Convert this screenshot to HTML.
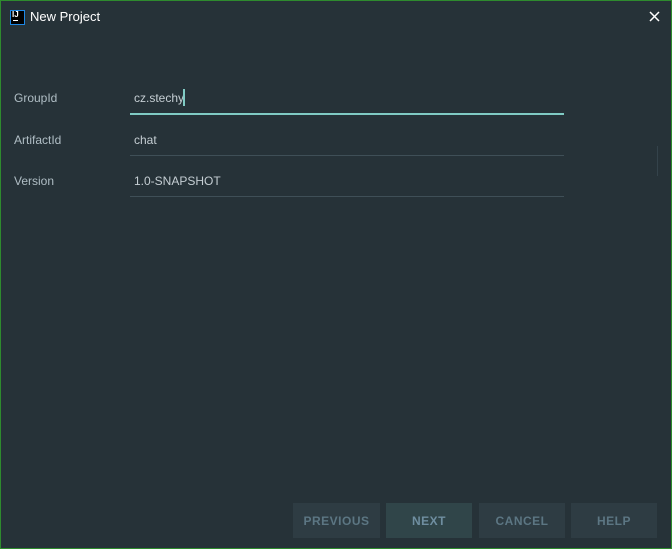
<!DOCTYPE html>
<html><head><style>
body{margin:0;width:672px;height:549px;overflow:hidden;background:#263238;font-family:"Liberation Sans","DejaVu Sans",sans-serif;}
.win{position:absolute;left:0;top:0;width:670px;height:547px;border:1px solid #2e8b2e;background:#263238;}
.t{position:absolute;color:#fff;font-size:13px;}
.lbl{position:absolute;left:13px;color:#b0bec5;font-size:12px;}
.val{position:absolute;left:133px;color:#c5ced3;font-size:12px;}
.ln{position:absolute;left:129px;width:434px;height:1px;background:#3f4f57;}
.btn{position:absolute;top:502px;height:35px;background:#2e3c43;color:#5c7683;font-weight:bold;font-size:12px;text-align:center;line-height:36px;letter-spacing:.5px;}
</style></head><body>
<div class="win">
<div style="position:absolute;left:9px;top:9px;width:13px;height:13px;border:1px solid #1e88e5;background:#000"></div>
<div style="position:absolute;left:11px;top:9px;color:#fff;font-size:8px;font-weight:bold">IJ</div>
<div style="position:absolute;left:12px;top:19px;width:5px;height:1px;background:#fff"></div>
<div class="t" style="left:29px;top:8px">New Project</div>
<svg style="position:absolute;left:648px;top:10px" width="11" height="11"><path d="M1 1L10 10M10 1L1 10" stroke="#fff" stroke-width="1.5"/></svg>
<div class="lbl" style="top:90px">GroupId</div>
<div class="val" style="top:90px">cz.stechy</div>
<div style="position:absolute;left:182px;top:88px;width:2px;height:17px;background:#80cbc4"></div>
<div class="ln" style="top:112px;height:2px;background:#80cbc4"></div>
<div class="lbl" style="top:132px">ArtifactId</div>
<div class="val" style="top:132px">chat</div>
<div class="ln" style="top:154px"></div>
<div class="lbl" style="top:173px">Version</div>
<div class="val" style="top:173px">1.0-SNAPSHOT</div>
<div class="ln" style="top:195px"></div>
<div style="position:absolute;left:656px;top:145px;width:1px;height:30px;background:#34434b"></div>
<div class="btn" style="left:292px;width:87px">PREVIOUS</div>
<div class="btn" style="left:385px;width:86px;background:#304549;color:#6f8ea0">NEXT</div>
<div class="btn" style="left:478px;width:86px">CANCEL</div>
<div class="btn" style="left:570px;width:86px">HELP</div>
</div>
</body></html>
